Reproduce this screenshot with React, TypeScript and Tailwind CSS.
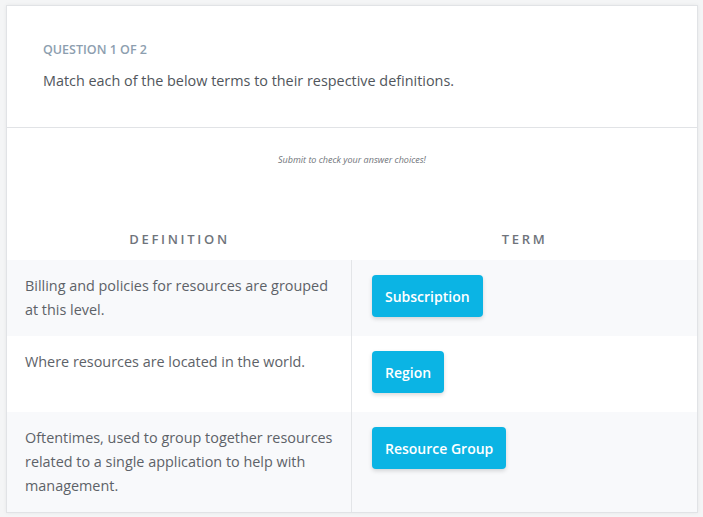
const rows = [
  {
    definition: "Billing and policies for resources are grouped at this level.",
    term: "Subscription",
    shaded: true,
  },
  {
    definition: "Where resources are located in the world.",
    term: "Region",
    shaded: false,
  },
  {
    definition:
      "Oftentimes, used to group together resources related to a single application to help with management.",
    term: "Resource Group",
    shaded: true,
  },
]

export default function App() {
  return (
    <div
      className="min-h-[517px] w-[703px] bg-[#f4f5f6] pl-[6px] pt-[5px] pr-[5px] pb-[5px]"
      style={{ fontFamily: '"Open Sans", "Liberation Sans", sans-serif' }}
    >
      <div className="w-[692px] border border-[#e1e3e6] bg-white shadow-[0_0_4px_rgba(0,0,0,0.06)]">
        {/* Question header */}
        <div className="h-[122px] border-b border-[#e1e3e6] pl-[36px] pt-[35px]">
          <div className="text-[12.5px] font-semibold uppercase leading-[18px] text-[#8d9eaf]">
            Question 1 of 2
          </div>
          <p className="mt-[12px] text-[14.4px] leading-[20px] text-[#51565c]">
            Match each of the below terms to their respective definitions.
          </p>
        </div>

        {/* Notice */}
        <div className="pt-[27px] text-center text-[9px] italic leading-[10px] text-[#6f7479]">
          Submit to check your answer choices!
        </div>

        {/* Column headers */}
        <div className="mt-[65px] grid grid-cols-2 pb-[12px] text-[13px] font-semibold leading-[18px] tracking-[2.7px] text-[#6f747b]">
          <div className="text-center">DEFINITION</div>
          <div className="text-center">TERM</div>
        </div>

        {/* Rows */}
        <div>
          {rows.map((row) => (
            <div
              key={row.term}
              className={`grid grid-cols-2 ${row.shaded ? "bg-[#f8f9fb]" : "bg-white"}`}
            >
              <div className="border-r border-[#e3e5e8] pl-[18px] pr-[16px] py-[14px] text-[14.4px] leading-[24px] text-[#5d6268]">
                {row.definition}
              </div>
              <div className="pl-[20px] pt-[15px] pb-[19px]">
                <button className="h-[42px] rounded-[4px] bg-[#0bb4e4] px-[13px] text-[14px] font-semibold text-white shadow-[0_2px_4px_rgba(0,0,0,0.15)]">
                  {row.term}
                </button>
              </div>
            </div>
          ))}
        </div>
      </div>
    </div>
  )
}
